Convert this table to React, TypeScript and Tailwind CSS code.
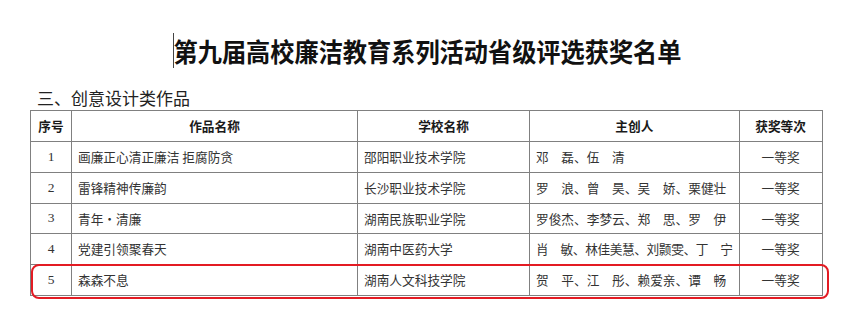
const rows = [
  { no: '1', work: '画廉正心清正廉洁 拒腐防贪', school: '邵阳职业技术学院', people: '邓　磊、伍　清' },
  { no: '2', work: '雷锋精神传廉韵', school: '长沙职业技术学院', people: '罗　浪、曾　昊、吴　娇、栗健壮' },
  { no: '3', work: '青年·清廉', school: '湖南民族职业学院', people: '罗俊杰、李梦云、郑　思、罗　伊' },
  { no: '4', work: '党建引领聚春天', school: '湖南中医药大学', people: '肖　敏、林佳美慧、刘颢雯、丁　宁', tight: true },
  { no: '5', work: '森森不息', school: '湖南人文科技学院', people: '贺　平、江　彤、赖爱亲、谭　畅' },
]

const cjk = "font-['Noto_Sans_CJK_SC',sans-serif]"
const cell = 'border border-[#808080] px-[6px] whitespace-nowrap'
const head = 'border border-[#808080] text-center font-bold text-[#1a1a1a]'

export default function App() {
  return (
    <div className={`w-[864px] h-[319px] bg-white overflow-hidden ${cjk}`}>
      <div className="pt-[33px] flex justify-center">
        <div className="flex items-center h-[35px] -ml-[10px]">
          <span className="w-px h-[35px] bg-[#444]" />
          <h1 className="text-[24.2px] leading-[35px] font-bold text-[#111] scale-y-[1.06] whitespace-nowrap">
            第九届高校廉洁教育系列活动省级评选获奖名单
          </h1>
        </div>
      </div>

      <div className="pl-[30px]">
        <h2 className="pl-[7px] mt-[18px] text-[17px] leading-[24px] text-[#222]">三、创意设计类作品</h2>

        <div className="relative">
          <table className="border-collapse text-[12.7px] text-[#333]">
            <colgroup>
              <col className="w-[41px]" />
              <col className="w-[286px]" />
              <col className="w-[172px]" />
              <col className="w-[209px]" />
              <col className="w-[83px]" />
            </colgroup>
            <thead>
              <tr className="h-[31px]">
                <th className={head}>序号</th>
                <th className={head}>作品名称</th>
                <th className={head}>学校名称</th>
                <th className={head}>主创人</th>
                <th className={head}>获奖等次</th>
              </tr>
            </thead>
            <tbody>
              {rows.map((r, i) => (
                <tr key={r.no} className={i === 2 ? 'h-[30px]' : 'h-[31px]'}>
                  <td className={`${cell} text-center font-['Liberation_Serif',serif] text-[13.5px]`}>{r.no}</td>
                  <td className={cell}>{r.work}</td>
                  <td className={cell}>{r.school}</td>
                  <td className={`${cell} ${r.tight ? 'tracking-[-0.4px]' : ''}`}>{r.people}</td>
                  <td className={`${cell} text-center`}>一等奖</td>
                </tr>
              ))}
            </tbody>
          </table>

          {/* highlight around row 5 */}
          <div className="absolute left-[1px] top-[154px] w-[798px] h-[35px] border-2 border-[#e31b23] rounded-[8px] pointer-events-none" />
        </div>
      </div>
    </div>
  )
}
